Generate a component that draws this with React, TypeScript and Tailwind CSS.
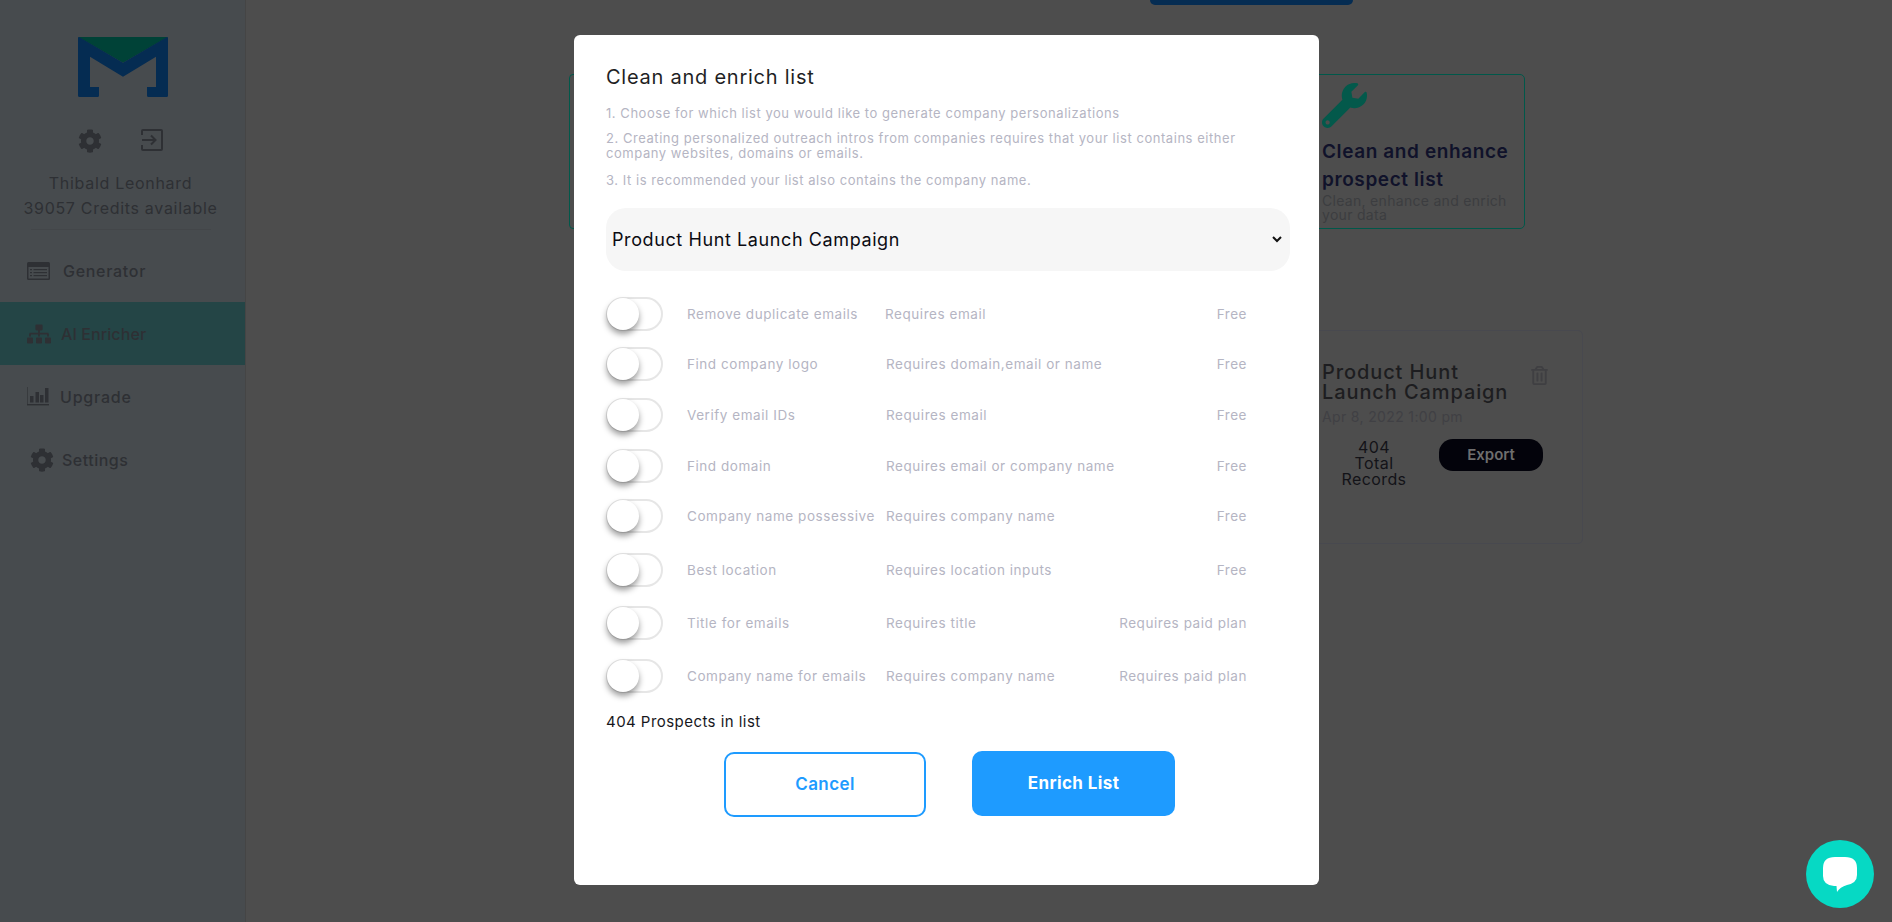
import React from "react";
import { FaCog, FaSitemap, FaWrench, FaRegTrashAlt } from "react-icons/fa";

function Logo() {
  return (
    <svg width="90" height="60" viewBox="0 0 90 60">
      <polygon points="0,0 90,0 45,25.7" fill="#004237" />
      <path d="M1 0 L45 25.7 L89 0 Q90 0 90 1 V58.5 Q90 60 88.5 60 H70.5 Q69 60 69 58.5 V50 H78 V19.7 L45 39.7 L12 19.7 V50 H21 V58.5 Q21 60 19.5 60 H1.5 Q0 60 0 58.5 V1 Q0 0 1 0 Z" fill="#052c52" />
    </svg>
  );
}

function ExitIcon() {
  return (
    <svg width="22" height="22" viewBox="0 0 22 22" fill="none" stroke="#2e3034" strokeWidth="2">
      <path d="M1 6 V2 Q1 1 2 1 H20 Q21 1 21 2 V20 Q21 21 20 21 H2 Q1 21 1 20 V16" />
      <path d="M1 11 H14 M10 6.5 L14.5 11 L10 15.5" />
    </svg>
  );
}

function GeneratorIcon() {
  return (
    <svg width="23" height="18" viewBox="0 0 23 18">
      <rect x="0" y="0" width="23" height="18" rx="1.5" fill="#2e3034" />
      <rect x="1.5" y="5" width="20" height="11.5" fill="#474b4e" />
      <g fill="#2e3034">
        <rect x="3" y="7" width="2" height="1.2" />
        <rect x="6.5" y="7" width="13.5" height="1.2" />
        <rect x="3" y="10" width="2" height="1.2" />
        <rect x="6.5" y="10" width="13.5" height="1.2" />
        <rect x="3" y="13" width="2" height="1.2" />
        <rect x="6.5" y="13" width="13.5" height="1.2" />
      </g>
    </svg>
  );
}

function BarsIcon() {
  return (
    <svg width="23" height="19" viewBox="0 0 23 19" fill="#2e3034">
      <rect x="0" y="0" width="1" height="18" opacity="0.6" />
      <rect x="0" y="17" width="22" height="1.4" />
      <rect x="3" y="9" width="3.5" height="6.5" />
      <rect x="8.5" y="5" width="3.5" height="10.5" />
      <rect x="13" y="8" width="3.5" height="7.5" />
      <rect x="18" y="1" width="3.5" height="14.5" />
    </svg>
  );
}

function ChatIcon() {
  return (
    <svg width="36" height="36" viewBox="0 0 36 36" fill="#ffffff">
      <path d="M13 1 H23 Q35 1 35 12 V19 Q35 27 25 29 Q18 31 15 36 L14.5 30 H12 Q1 29 1 20 V12 Q1 1 13 1 Z" />
    </svg>
  );
}

function Toggle() {
  return (
    <div className="relative w-[57px] h-[34px] rounded-full border-2 border-[#e6e6e6] bg-white shrink-0">
      <div className="absolute left-[-1px] top-[-1px] w-[32px] h-[32px] rounded-full bg-white shadow-[0_4px_6px_rgba(0,0,0,0.4)]" />
    </div>
  );
}

const rows = [
  { a: "Remove duplicate emails", b: "Requires email", c: "Free", m: "mt-0", o: "-ml-px" },
  { a: "Find company logo", b: "Requires domain,email or name", c: "Free", m: "mt-[16px]", o: "" },
  { a: "Verify email IDs", b: "Requires email", c: "Free", m: "mt-[17px]", o: "" },
  { a: "Find domain", b: "Requires email or company name", c: "Free", m: "mt-[17px]", o: "" },
  { a: "Company name possessive", b: "Requires company name", c: "Free", m: "mt-[16px]", o: "" },
  { a: "Best location", b: "Requires location inputs", c: "Free", m: "mt-[20px]", o: "" },
  { a: "Title for emails", b: "Requires title", c: "Requires paid plan", m: "mt-[19px]", o: "" },
  { a: "Company name for emails", b: "Requires company name", c: "Requires paid plan", m: "mt-[19px]", o: "" },
];

function NavItem({ icon, label, active, iconW, track }: { icon: React.ReactNode; label: string; active?: boolean; iconW: string; track: string }) {
  return (
    <div className={`h-[63px] flex items-center pl-[27px] text-[16px] font-medium text-[#2e3034] ${track} ${active ? "bg-[#244546]" : ""}`}>
      <div className={`${iconW} flex items-center`}>{icon}</div>
      <span>{label}</span>
    </div>
  );
}

export default function App() {
  return (
    <div className="relative w-[1892px] h-[922px] overflow-hidden flex bg-[#4d4d4d] font-['Inter',sans-serif]">
      {/* sidebar */}
      <aside className="w-[246px] shrink-0 h-full bg-[#474b4e] border-r border-[#454545] flex flex-col">
        <div className="pt-[37px] flex justify-center pl-[1px]">
          <Logo />
        </div>
        <div className="mt-[32px] flex items-start pl-[78px] h-[24px]">
          <FaCog size={24} color="#2e3034" />
          <div className="ml-[39px]">
            <ExitIcon />
          </div>
        </div>
        <div className="mt-[18px] text-center text-[16px] leading-[25px] font-normal text-[#2e3034] tracking-[0.7px] pr-[4px]">
          <div>Thibald Leonhard</div>
          <div>39057 Credits available</div>
        </div>
        <div className="mt-[8px] mx-[31px] w-[180px] h-px bg-[#434649]" />
        <nav className="mt-[9px] flex flex-col">
          <NavItem iconW="w-[36px]" track="tracking-[0.7px]" icon={<GeneratorIcon />} label="Generator" />
          <NavItem iconW="w-[34px]" track="tracking-[0.1px]" icon={<FaSitemap size={24} color="#2e3034" />} label="AI Enricher" active />
          <NavItem iconW="w-[33px]" track="tracking-[0.8px]" icon={<BarsIcon />} label="Upgrade" />
          <NavItem iconW="w-[35px]" track="tracking-[0.5px]" icon={<FaCog size={24} color="#2e3034" className="ml-[3px]" />} label="Settings" />
        </nav>
      </aside>

      {/* main content behind the dialog */}
      <main className="flex-1 flex flex-col pl-[323px]">
        <div className="ml-[581px] w-[203px] h-[5px] rounded-b-[12px] bg-[#052c52]" />
        <div className="mt-[69px] flex w-[956px] justify-between">
          <div className="w-[215px] h-[155px] rounded-[4px] border border-[#00584a]" />
          <div className="w-[215px] h-[155px] rounded-[5px] border border-[#00584a] pl-[11px] pt-[8px]">
            <FaWrench size={45} color="#03594b" />
            <div className="mt-[10px] text-[19px] leading-[28px] font-semibold text-[#10122a] tracking-[0.6px]">
              Clean and enhance prospect list
            </div>
            <div className="text-[14px] leading-[14px] text-[#3c3d40] tracking-[0.3px]">Clean, enhance and enrich your data</div>
          </div>
        </div>
        <div className="mt-[101px] ml-[741px] w-[273px] h-[214px] rounded-[5px] border border-[#48494f] pl-[11px] pt-[31px]">
          <div className="flex">
            <div className="w-[200px] text-[20px] leading-[20px] font-medium text-[#1d1d20] tracking-[0.9px]">
              Product Hunt Launch Campaign
            </div>
            <FaRegTrashAlt size={19} color="#3f3f42" className="mt-[4px] ml-[8px]" />
          </div>
          <div className="mt-[5px] text-[14px] leading-[20px] text-[#404044] tracking-[0.35px]">Apr 8, 2022 1:00 pm</div>
          <div className="mt-[12px] flex items-start">
            <div className="w-[104px] text-center text-[16px] leading-[16px] text-[#131318] tracking-[0.4px]">
              <div>404</div>
              <div>Total</div>
              <div>Records</div>
            </div>
            <div className="ml-[13px] w-[104px] h-[32px] rounded-[14px] bg-[#03030b] flex items-center justify-center text-[15px] font-semibold text-[#6e6e6e]">
              Export
            </div>
          </div>
        </div>
      </main>

      {/* dialog */}
      <div className="absolute left-[574px] top-[35px] w-[745px] h-[850px] bg-white rounded-[6px] pl-[32px] pr-[29px] pt-[29px]">
        <h2 className="text-[20px] leading-[26px] font-normal text-[#1f1f24] tracking-[0.75px]">Clean and enrich list</h2>
        <div className="mt-[16px] text-[13px] leading-[15px] text-[#b5b5c3] tracking-[0.55px]">
          <p className="h-[15px]">1. Choose for which list you would like to generate company personalizations</p>
          <p className="mt-[10px]">2. Creating personalized outreach intros from companies requires that your list contains either company websites, domains or emails.</p>
          <p className="mt-[12px]">3. It is recommended your list also contains the company name.</p>
        </div>
        <div className="mt-[20px] h-[63px] w-[684px] rounded-[20px] bg-[#f6f6f6] flex items-center justify-between pl-[6px] pr-[8px] text-[18px] tracking-[0.6px] text-[#0b0b12]">
          <span>Product Hunt Launch Campaign</span>
          <svg width="10" height="7" viewBox="0 0 10 7" fill="none" stroke="#111" strokeWidth="2">
            <path d="M1 1 L5 5 L9 1" />
          </svg>
        </div>
        <div className="mt-[26px]">
          {rows.map((r) => (
            <div key={r.a} className={`${r.m} h-[34px] flex items-center text-[13.5px] text-[#b5b5c3] tracking-[0.55px]`}>
              <Toggle />
              <span className="ml-[24px] w-[199px] whitespace-nowrap">{r.a}</span>
              <span className={`${r.o} whitespace-nowrap`}>{r.b}</span>
              <span className="ml-auto mr-[43px] whitespace-nowrap">{r.c}</span>
            </div>
          ))}
        </div>
        <div className="mt-[19px] text-[15px] leading-[20px] text-[#17171c] tracking-[0.45px]">404 Prospects in list</div>
        <div className="mt-[19px] flex items-start pl-[118px]">
          <button className="mt-[1px] w-[202px] h-[65px] rounded-[10px] border-2 border-[#1e9bff] bg-white text-[#1e9bff] text-[17px] font-semibold tracking-[0.4px]">
            Cancel
          </button>
          <button className="ml-[46px] w-[203px] h-[65px] rounded-[10px] bg-[#1e9bff] text-white text-[17px] font-bold tracking-[0.4px]">
            Enrich List
          </button>
        </div>
      </div>

      {/* chat launcher */}
      <div className="absolute left-[1806px] top-[840px] w-[68px] h-[68px] rounded-full bg-[#06d9c4] flex items-center justify-center">
        <ChatIcon />
      </div>
    </div>
  );
}
